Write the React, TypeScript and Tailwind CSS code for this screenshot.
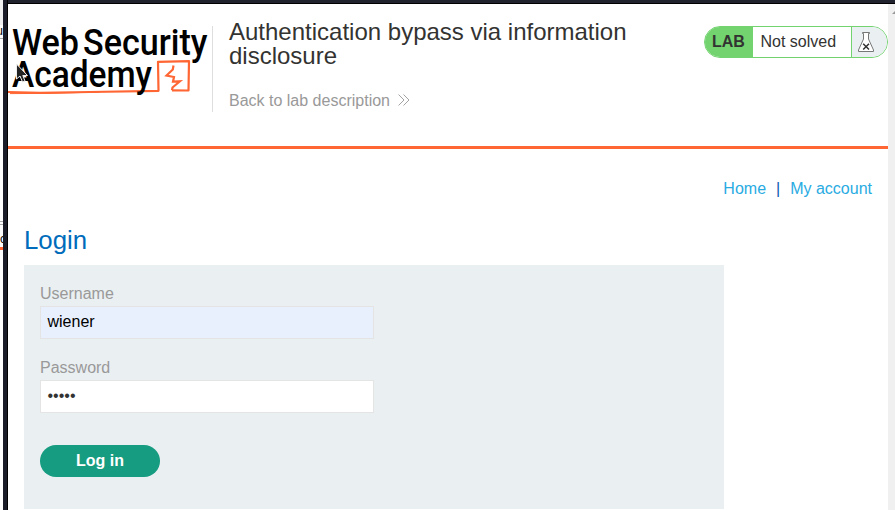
function Logo() {
  return (
    <svg width="204" height="84" viewBox="8 20 204 84" className="block shrink-0" fontFamily="Roboto, 'Open Sans', sans-serif" fontWeight="500" fontSize="37.5" fill="#000">
      <text x="12" y="54.7" textLength="67" lengthAdjust="spacingAndGlyphs">Web</text>
      <text x="83" y="54.7" textLength="124.5" lengthAdjust="spacingAndGlyphs">Security</text>
      <g fill="none" stroke="#ff6633">
        <path d="M8 92 L40 92.8 L90 92 L158.5 90.8 L158 61.8 L189 61.2 L188.5 90.5 L172 90.3" strokeWidth="2.2" strokeLinejoin="round" />
        <path d="M10 93.6 L48 93.4 L100 92" strokeWidth="1" />
        <path d="M173.5 65.5 L172.8 69.5 L166.5 75.5 L174 77 L173 81.5 L180 81.3 L172.5 87.5 L172 90.3" strokeWidth="2.2" />
      </g>
      <text x="12" y="86.7" textLength="140" lengthAdjust="spacingAndGlyphs">Academy</text>
      <path d="M16.5 64 V79 L20 76 L22.5 82 L25 81 L22.8 75.5 H27.5 Z" fill="#222" stroke="#eee" strokeWidth="1" />
    </svg>
  );
}

function LabStatus() {
  return (
    <div className="mt-[22px] flex h-8 w-[184px] shrink-0 overflow-hidden rounded-full border border-[#72d36f] bg-white text-base leading-[30px] text-[#333332]">
      <span className="w-12 bg-[#72d36f] pl-[7px] font-bold">LAB</span>
      <span className="w-[98px] pl-[7.5px]">Not solved</span>
      <span className="flex flex-1 border-l border-[#72d36f] bg-[#eaeff2] pl-[5px] pt-[5px]">
        <svg width="18" height="21" viewBox="0 0 18 21" fill="none" stroke="#777" strokeWidth="1">
          <path d="M5.5 1.5V0.5H12.5V1.5H11.5V7L16.5 18V19.5H1.5V18L6.5 7V1.5Z" fill="#fff" />
          <path d="M6.2 11.7L12 17.5M12 11.7L6.2 17.5" stroke="#333" strokeWidth="1.5" />
        </svg>
      </span>
    </div>
  );
}

export default function App() {
  return (
    <div className="flex h-[510px] w-[895px] overflow-hidden bg-white font-['Liberation_Sans',Arial,sans-serif] text-base">
      <div className="h-full w-[3px] shrink-0 overflow-hidden bg-white">
        <div className="h-[25px] bg-[#f0f0f0]" />
        <div className="flex h-[13px] justify-end overflow-hidden text-[12px] leading-[13px] text-black"><span>u</span></div>
        <div className="h-px bg-[#aaa]" />
        <div className="mt-[182px] h-px bg-[#aaa]" />
        <div className="mt-0.5 h-px bg-[#aaa]" />
        <div className="mt-[7px] h-[14px] overflow-hidden text-[12px] leading-[14px] text-black"><span>c</span></div>
        <div className="mt-px h-[3px] bg-[#ff6633]" />
      </div>
      <div className="w-[5px] shrink-0 border-r border-black bg-[#1b1d29]" />
      <div className="flex min-w-0 flex-1 flex-col">
        <div className="h-1 shrink-0 border-b border-black bg-[#20222e]" />
        <div className="flex min-h-0 flex-1">
          <main className="w-[880px] shrink-0">
            <header className="flex h-[145px] border-b-[3px] border-[#ff6633]">
              <div className="pt-4"><Logo /></div>
              <div className="mt-[22px] h-[86px] w-px bg-[#dedede]" />
              <div className="w-[491px] pl-4 pt-4">
                <h1 className="w-[430px] text-2xl leading-6 text-[#333332]">Authentication bypass via information disclosure</h1>
                <a className="mt-6 flex items-center leading-[18px] text-[#999]">
                  Back to lab description
                  <svg className="ml-[7px] -mt-0.5" width="14" height="14" viewBox="0 0 14 14" fill="none" stroke="#999" strokeWidth="0.9">
                    <path d="M1.5 1.5L7 7L1.5 12.5M6.5 1.5L12 7L6.5 12.5" />
                  </svg>
                </a>
              </div>
              <LabStatus />
            </header>
            <nav className="flex justify-end pr-4 pt-[31px] leading-[18px] text-[#29abe2]">
              <a>Home</a>
              <span className="px-[10px] text-[#0b5cad]">|</span>
              <a>My account</a>
            </nav>
            <section className="pl-4">
              <h2 className="mt-[27px] text-[25.8px] leading-[30px] text-[#006cbb]">Login</h2>
              <form className="mt-[10px] h-[244px] w-[700px] bg-[#eaeff2] px-4 pt-5 text-[#999]">
                <label className="block h-[21px] leading-[18px]">Username</label>
                <div className="h-[33px] w-[334px] border border-[#e4e4e4] bg-[#e8f0fe] pl-[6.5px] leading-[30px] text-black">wiener</div>
                <label className="mt-5 block h-[21px] leading-[18px]">Password</label>
                <div className="h-[33px] w-[334px] border border-[#e4e4e4] bg-white pl-[6.5px] leading-[30px] text-[#333]">•••••</div>
                <button type="button" className="mt-8 block h-8 w-[120px] rounded-full bg-[#169c80] text-center font-bold leading-8 text-white">Log in</button>
              </form>
            </section>
          </main>
          <div className="w-[7px] shrink-0 bg-[#f0f0f0] pl-1 pt-[7px]">
            <svg width="3" height="3" viewBox="0 0 3 3"><path d="M3 0V3H0Z" fill="#999" /></svg>
          </div>
        </div>
      </div>
    </div>
  );
}
